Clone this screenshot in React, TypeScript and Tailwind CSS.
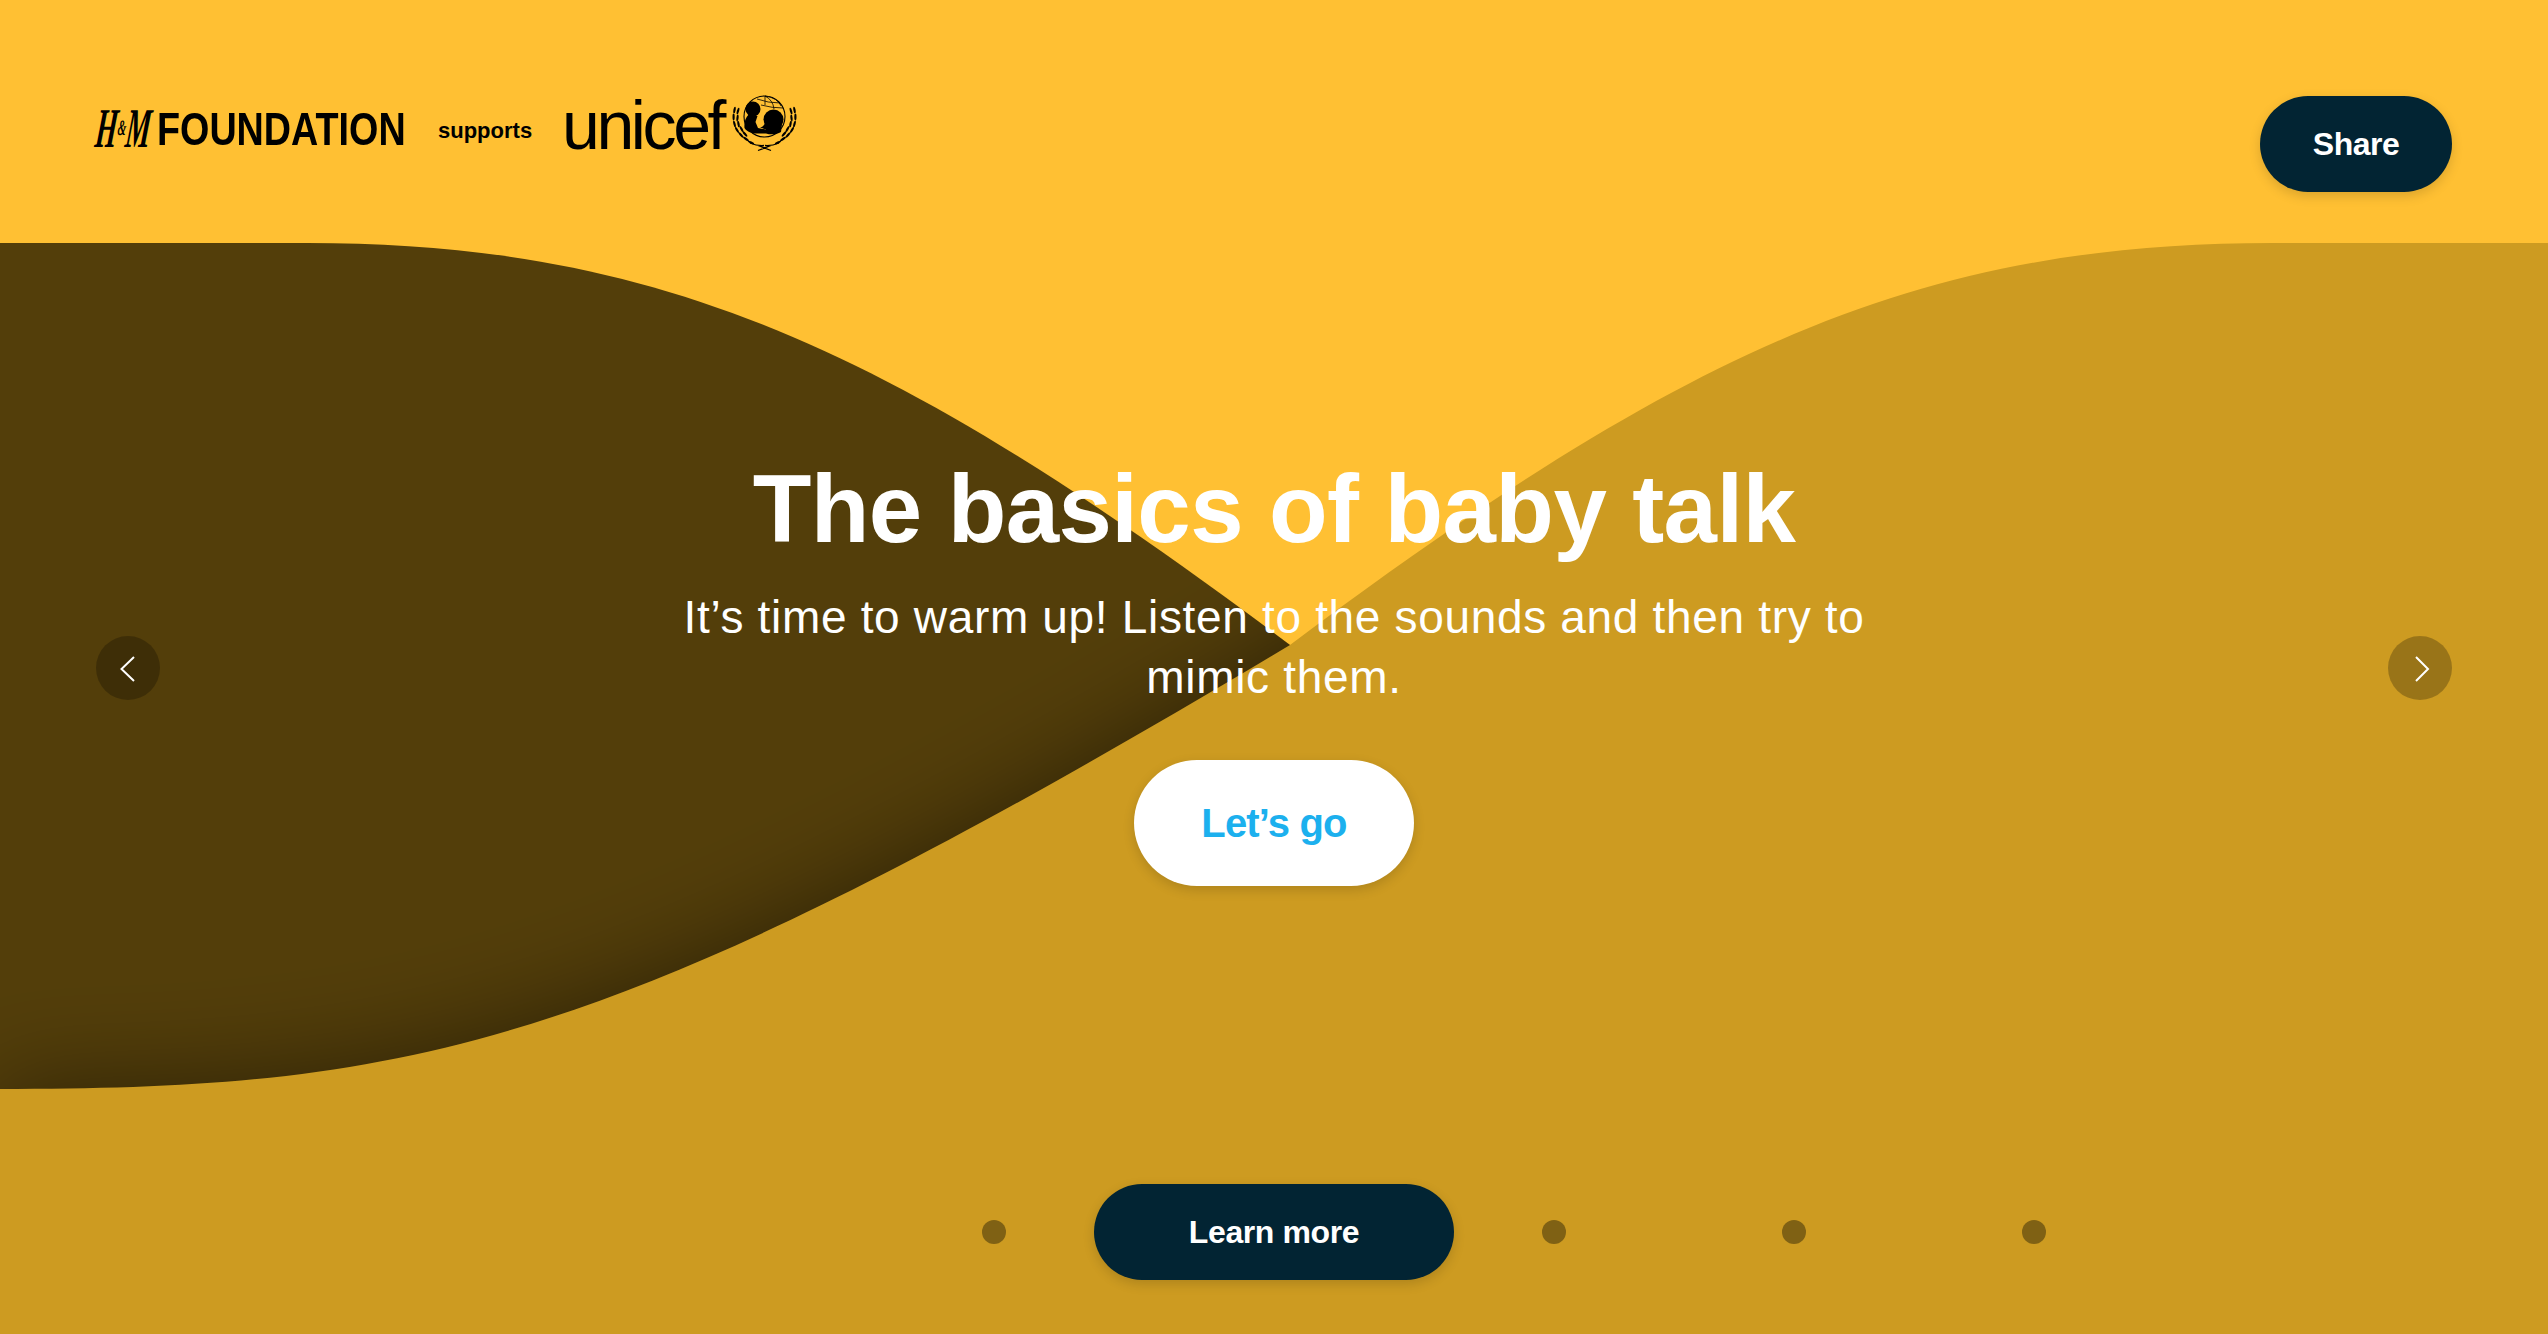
const GOLD_PATH = "M2548 243 L2273 243 C1923 243 1690 345 1290 645 C620 1046 420 1089 0 1089 L0 1334 L2548 1334 Z";
const DARK_PATH = "M0 243 L307 243 C657 243 890 345 1290 645 L1290 1334 L0 1334 Z";

function Waves() {
  return (
    <svg className="absolute inset-0 h-full w-full" viewBox="0 0 2548 1334" aria-hidden="true">
      <defs>
        <clipPath id="dark-clip">
          <path d={DARK_PATH} />
        </clipPath>
        <filter id="edge-blur" filterUnits="userSpaceOnUse" x="-200" y="0" width="3000" height="1500">
          <feGaussianBlur stdDeviation="50" />
        </filter>
      </defs>
      <path d={DARK_PATH} fill="#533e0a" />
      <g clipPath="url(#dark-clip)">
        <path d={GOLD_PATH} fill="#000" fillOpacity="0.45" filter="url(#edge-blur)" />
      </g>
      <path d={GOLD_PATH} fill="#cd9b21" />
    </svg>
  );
}

// laurel leaves of the left branch, the right one is mirrored
const LEAVES = [
  [4.5, 19, 10], [3.6, 26, 0], [4.5, 33, -14], [7, 39, -30], [11, 44, -42], [16, 48, -55], [21, 51.5, -65],
  [8, 20, 15], [7.5, 27, 5], [8.5, 33, -10], [11.5, 38, -28], [15, 43, -40],
];

function Emblem() {
  return (
    <svg className="mt-[-5px] h-[66px] w-[70px] shrink-0" viewBox="0 0 70 66" aria-hidden="true">
      <ellipse cx="34.5" cy="25.5" rx="20.5" ry="20.5" fill="none" stroke="#000" strokeWidth="1.1" />
      <g fill="none" stroke="#000" strokeWidth="0.8">
        <path d="M27 8 Q38 12 50 12" />
        <path d="M31 14 Q42 17 53 17" />
        <path d="M35 5 V14" />
        <path d="M35 5 Q43 9 44 18" />
        <path d="M35 5 Q48 7 51 15" />
      </g>
      <circle cx="23" cy="18" r="7.5" fill="#000" />
      <path d="M19 23 C15 27 14 32 14.5 37 C17 41 22 42.5 27 42.5 L36 42.5 L36 38.5 L28 37 L25.5 31 L27.5 25 Z" fill="#000" />
      <circle cx="43.5" cy="28.5" r="10" fill="#000" />
      <path d="M35 32 C34 35 32 36 30 36.5 L36 38.5 L36 42.5 C41 44 47 43.5 51 41 L52 33 Z" fill="#000" />
      <g fill="#000">
        {LEAVES.map(([x, y, r]) => (
          <g key={`${x}-${y}`}>
            <ellipse cx={x} cy={y} rx="1.1" ry="3.4" transform={`rotate(${r} ${x} ${y})`} />
            <ellipse cx={69 - x} cy={y} rx="1.1" ry="3.4" transform={`rotate(${-r} ${69 - x} ${y})`} />
          </g>
        ))}
      </g>
      <path d="M28 59.5 L41 54.5 M41 59.5 L28 54.5 M20 52 Q27 55 34 54.5 M49 52 Q42 55 35 54.5" fill="none" stroke="#000" strokeWidth="1.3" />
    </svg>
  );
}

function Logos() {
  return (
    <div className="flex h-[60px] items-start font-['Liberation_Sans',sans-serif] text-black">
      <span className="mt-[12px] flex w-[61px] origin-left scale-x-[0.5] -skew-x-12 items-center font-['Liberation_Serif',serif] text-[56px] leading-[40px] font-bold whitespace-nowrap italic">
        H<span className="text-[22px]">&amp;</span>M
      </span>
      <span className="mt-[13px] w-[281px] origin-left scale-x-[0.82] text-[46px] leading-[40px] font-bold whitespace-nowrap">
        FOUNDATION
      </span>
      <span className="mt-[21px] w-[124px] text-[22px] leading-[28px] font-bold whitespace-nowrap">supports</span>
      <span className="mt-[-9px] w-[168px] text-[68px] leading-[76px] tracking-[-3.4px] whitespace-nowrap">unicef</span>
      <Emblem />
    </div>
  );
}

function ArrowButton({ dir }: { dir: "left" | "right" }) {
  return (
    <button className="mt-[444px] flex h-16 w-16 shrink-0 items-center justify-center rounded-full bg-black/25">
      <svg
        className={dir === "left" ? "mt-[2px] h-[26px] w-4" : "mt-[2px] ml-1 h-[26px] w-4"}
        viewBox="0 0 16 26"
        fill="none"
        stroke="#fff"
        strokeWidth="2"
      >
        <path d={dir === "left" ? "M14 1 L1.5 13 L14 25" : "M2 1 L14 13 L2 25"} />
      </svg>
    </button>
  );
}

function PagerDot() {
  return <span className="h-6 w-6 shrink-0 rounded-full bg-[#7f6114]" />;
}

export default function App() {
  return (
    <div className="relative h-screen w-full overflow-hidden bg-[#ffc033] font-['Liberation_Sans',sans-serif]">
      <Waves />
      <div className="relative flex h-full flex-col">
        <header className="flex items-start justify-between px-24 pt-24">
          <Logos />
          <button className="h-24 w-48 rounded-full bg-[#022433] text-[32px] font-bold tracking-[-0.5px] text-white shadow-[0_4px_12px_rgba(0,0,0,0.15)]">
            Share
          </button>
        </header>

        <div className="flex items-start justify-between px-24">
          <ArrowButton dir="left" />
          <main className="flex flex-1 flex-col items-center pt-[265px] text-center text-white">
            <h1 className="text-[96px] leading-[104px] font-bold tracking-[-0.6px]">The basics of baby talk</h1>
            <p className="mt-[26px] max-w-[1240px] text-[46px] leading-[60px] tracking-[0.67px]">
              It’s time to warm up! Listen to the sounds and then try to mimic them.
            </p>
            <button className="mt-[53px] h-[126px] w-[280px] rounded-full bg-white text-[40px] font-bold tracking-[-0.8px] text-[#1cb0ee] shadow-[0_4px_12px_rgba(0,0,0,0.15)]">
              Let’s go
            </button>
          </main>
          <ArrowButton dir="right" />
        </div>

        <nav className="mt-[298px] flex items-center pl-[982px]">
          <PagerDot />
          <button className="mx-[88px] h-24 w-[360px] shrink-0 rounded-full bg-[#022433] text-[32px] font-bold tracking-[-0.4px] text-white shadow-[0_4px_12px_rgba(0,0,0,0.15)]">
            Learn more
          </button>
          <PagerDot />
          <span className="w-[216px] shrink-0" />
          <PagerDot />
          <span className="w-[216px] shrink-0" />
          <PagerDot />
        </nav>
      </div>
    </div>
  );
}
